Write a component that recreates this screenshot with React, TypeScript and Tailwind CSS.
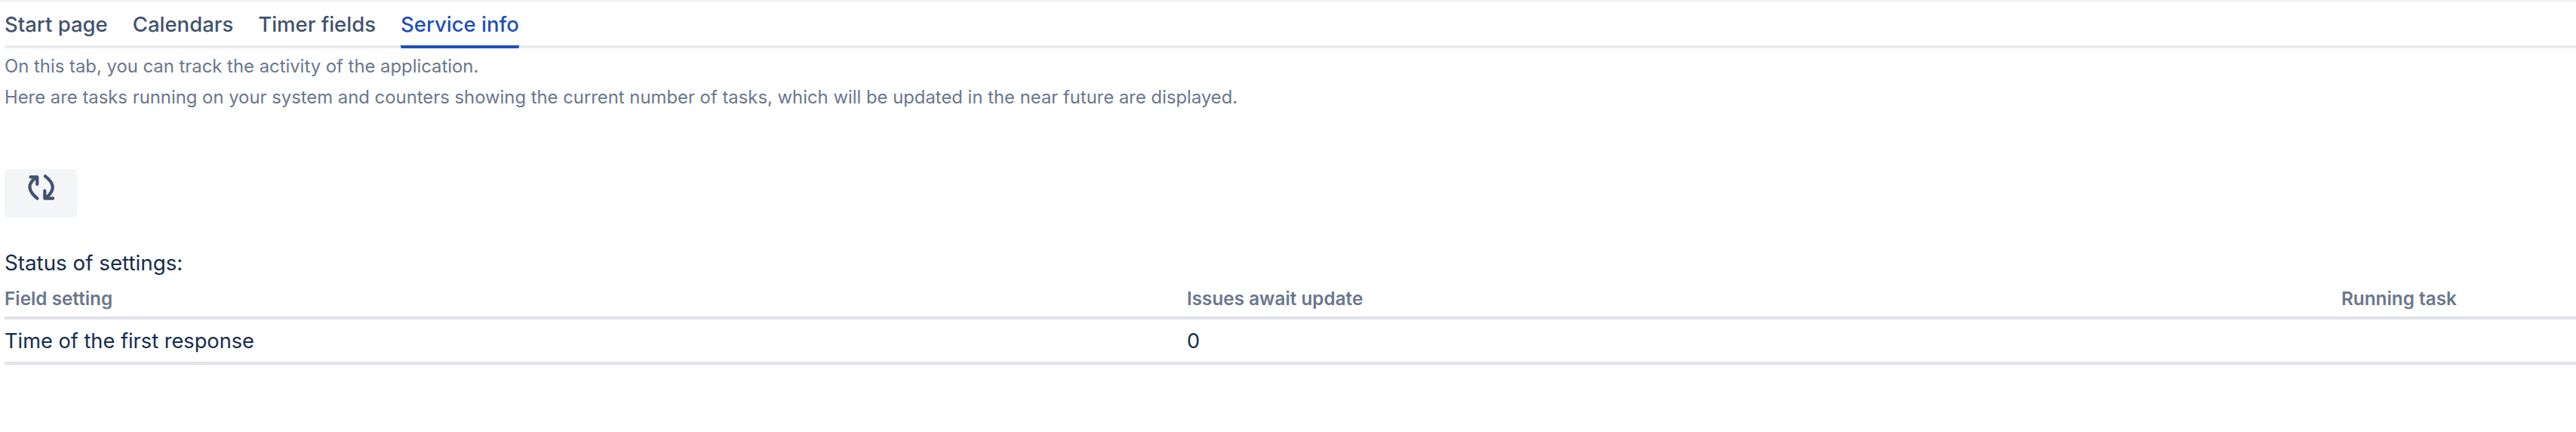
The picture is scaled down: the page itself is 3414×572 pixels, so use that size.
import React from 'react'

const tabs = ['Start page', 'Calendars', 'Timer fields', 'Service info']

const RefreshIcon = () => (
  <svg width="36" height="36" viewBox="0 0 36 36" fill="none" stroke="#42526e" strokeWidth="4.2" strokeLinecap="round" strokeLinejoin="round">
    <path d="M4.500 4.300 H13.300 V14" />
    <path d="M11.500 5.500 Q-5.500 17 13.300 32.700" />
    <path d="M34 32.700 H23.300 V22.500" />
    <path d="M24 3.300 Q43 18 25 31.700" />
  </svg>
)

export default function App() {
  return (
    <div className="relative min-h-[572px] bg-white pl-[6px] pt-[3px] font-['Inter',sans-serif]">
      <div className="absolute left-0 top-0 h-[3px] w-full bg-[#f4f5f7]" />

      {/* Tabs */}
      <div className="flex h-[61px] gap-[33px] border-b-[4px] border-[#ebecf0]">
        {tabs.map((tab, i) => (
          <div
            key={tab}
            className={
              i === 3
                ? 'h-[61px] rounded-b-[2px] border-b-[4px] border-[#1f4fbf] pt-[12px] text-[27.5px] leading-[34px] font-medium text-[#1f4fbf]'
                : 'h-[61px] pt-[12px] text-[27.5px] leading-[34px] font-medium text-[#42526e]'
            }
          >
            {tab}
          </div>
        ))}
      </div>

      {/* Description */}
      <div className="mt-[3px] text-[23.85px] leading-[41px] text-[#6b778c]">
        <p>On this tab, you can track the activity of the application.</p>
        <p>Here are tasks running on your system and counters showing the current number of tasks, which will be updated in the near future are displayed.</p>
      </div>

      {/* Refresh */}
      <button className="mt-[75px] flex h-[64px] w-[96px] justify-center rounded-[6px] bg-[#f4f5f7] pt-[6px]">
        <RefreshIcon />
      </button>

      <div className="mt-[42px] text-[27.75px] leading-[36px] text-[#172b4d]">Status of settings:</div>

      {/* Settings status */}
      <table className="mt-[14px] w-full table-fixed border-collapse">
        <thead>
          <tr className="border-b-[4px] border-[#dfe1e6] text-left text-[24.3px] leading-[30px] text-[#6b778c]">
            <th className="w-[1567px] pb-[9px] font-semibold">Field setting</th>
            <th className="w-[1530px] pb-[9px] font-semibold">Issues await update</th>
            <th className="pb-[9px] font-semibold">Running task</th>
          </tr>
        </thead>
        <tbody>
          <tr className="border-b-[4px] border-[#dfe1e6] text-[27.2px] leading-[36px] text-[#172b4d]">
            <td className="pt-[11px] pb-[9px]">Time of the first response</td>
            <td className="pt-[11px] pb-[9px]">0</td>
            <td />
          </tr>
        </tbody>
      </table>
    </div>
  )
}
